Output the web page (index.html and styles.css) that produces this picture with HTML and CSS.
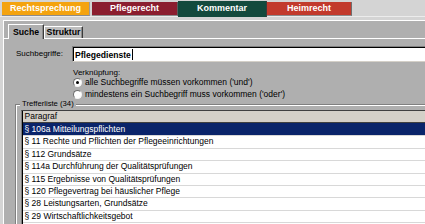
FILE: index.html
```html
<!DOCTYPE html>
<html lang="de">
<head>
<meta charset="utf-8">
<title>Suche</title>
<link rel="stylesheet" href="styles.css">
</head>
<body>
<div class="app">
  <nav class="topbar">
    <div class="ttab t-recht">Rechtsprechung</div>
    <div class="ttab t-pflege">Pflegerecht</div>
    <div class="ttab t-komm active">Kommentar</div>
    <div class="ttab t-heim">Heimrecht</div>
  </nav>
  <div class="main">
    <div class="tabs">
      <div class="tab active">Suche</div>
      <div class="tab">Struktur</div>
    </div>
    <div class="page">
      <div class="search-row">
        <span class="lbl">Suchbegriffe:</span>
        <div class="input"><span class="val">Pflegedienste</span><span class="caret"></span></div>
      </div>
      <div class="options">
        <div class="opt-title">Verknüpfung:</div>
        <div class="radio-row"><span class="radio checked"></span><span>alle Suchbegriffe müssen vorkommen ('und')</span></div>
        <div class="radio-row"><span class="radio"></span><span>mindestens ein Suchbegriff muss vorkommen ('oder')</span></div>
      </div>
      <div class="group">
        <span class="legend">Trefferliste (34)</span>
        <div class="list">
          <div class="list-inner">
            <div class="head">Paragraf</div>
            <div class="row sel">§ 106a Mitteilungspflichten</div>
            <div class="row">§ 11 Rechte und Pflichten der Pflegeeinrichtungen</div>
            <div class="row">§ 112 Grundsätze</div>
            <div class="row">§ 114a Durchführung der Qualitätsprüfungen</div>
            <div class="row">§ 115 Ergebnisse von Qualitätsprüfungen</div>
            <div class="row">§ 120 Pflegevertrag bei häuslicher Pflege</div>
            <div class="row">§ 28 Leistungsarten, Grundsätze</div>
            <div class="row">§ 29 Wirtschaftlichkeitsgebot</div>
            <div class="row"></div>
          </div>
        </div>
      </div>
    </div>
  </div>
</div>
</body>
</html>
```
FILE: styles.css
```css
html, body {
  margin: 0;
  padding: 0;
}
body {
  background: #d4d4d4;
  font-family: "Liberation Sans", Arial, sans-serif;
  color: #000;
}
.app {
  width: 425px;
  height: 224px;
  overflow: hidden;
  background: #d4d4d4;
}

/* top colored tabs */
.topbar {
  display: flex;
  align-items: flex-start;
  height: 17px;
  box-sizing: border-box;
  padding: 2px 0 0 2px;
  border-bottom: 1px solid #ececec;
}
.ttab {
  height: 13px;
  line-height: 13px;
  border-bottom: 1px solid #8c8c8c;
  border-right: 1px solid #7a7a7a;
  color: #fff;
  font-weight: bold;
  font-size: 9px;
  text-align: center;
  white-space: nowrap;
}
.t-recht { width: 87px; background: #f4a30f; margin-right: 2px; border-right-color: #9a9a9a; }
.t-pflege { width: 85px; background: #8b1e2f; border-right-color: #5a5a5a; }
.t-komm { width: 88px; background: #134a3d; border-right-color: #3c3c3c; }
.t-heim { width: 84px; background: #c23a2c; border-right-color: #6e6e6e; }
.ttab.active {
  margin-top: -1px;
  height: 15px;
  padding-top: 1px;
  line-height: 13px;
  border-bottom: none;
}

/* main panel */
.main {
  width: 460px;
  height: 210px;
  margin: 3px 0 0 3px;
  background: #afafaf;
  border-top: 1px solid #fff;
  border-left: 1px solid #fff;
}
.tabs {
  display: flex;
  align-items: flex-end;
  height: 14px;
  padding: 3px 0 0 4px;
  position: relative;
  z-index: 1;
}
.tab {
  box-sizing: border-box;
  border-top: 1px solid #fff;
  border-left: 1px solid #fff;
  border-right: 1px solid #3a3a3a;
  box-shadow: inset -1px 0 0 #8a8a8a;
  font-weight: bold;
  font-size: 8.7px;
  text-align: center;
  white-space: nowrap;
  width: 39px;
  height: 12px;
  line-height: 11px;
  background: #bdbdbd;
}
.tab.active {
  width: 36px;
  height: 15px;
  line-height: 13px;
  padding-top: 1px;
  margin-bottom: -1px;
  background: #afafaf;
}

.page {
  border-top: 1px solid #fff;
  padding-top: 7px;
}
.search-row {
  display: flex;
  height: 16px;
}
.lbl {
  width: 56px;
  margin-left: 12px;
  font-size: 8px;
  line-height: 16px;
  white-space: nowrap;
}
.input {
  flex: 1;
  box-sizing: border-box;
  height: 16px;
  background: #fff;
  border-top: 1px solid #808080;
  border-left: 1px solid #808080;
  border-bottom: 1px solid #d4d0c8;
  box-shadow: inset 1px 1px 0 #000;
  padding-left: 2px;
  display: flex;
  align-items: center;
}
.val {
  font-weight: bold;
  font-size: 8.6px;
  line-height: 14px;
  padding-top: 1px;
}
.caret {
  width: 1px;
  height: 11px;
  background: #000;
  margin-left: 1px;
}

.options {
  margin-top: 7px;
  padding-left: 69px;
  font-size: 8.5px;
}
.opt-title {
  font-size: 8px;
  line-height: 7px;
}
.radio-row {
  display: flex;
  align-items: center;
  height: 12px;
  line-height: 12px;
  white-space: nowrap;
}
.radio {
  box-sizing: border-box;
  width: 9px;
  height: 9px;
  margin-right: 3px;
  border-radius: 50%;
  background: #fff;
  border: 1px solid;
  border-color: #6e6e6e #f4f4f4 #f4f4f4 #6e6e6e;
  position: relative;
  flex: none;
}
.radio.checked::after {
  content: "";
  position: absolute;
  left: 2px;
  top: 2px;
  width: 3px;
  height: 3px;
  border-radius: 50%;
  background: #000;
}

/* group box */
.group {
  position: relative;
  margin: 4px 0 0 11px;
  border-top: 1px solid #808080;
  border-left: 1px solid #808080;
  box-shadow: inset 1px 1px 0 #fff;
  padding: 5px 0 0 5px;
  height: 200px;
}
.legend {
  position: absolute;
  top: -6px;
  left: 4px;
  padding: 0 2px;
  background: #afafaf;
  font-size: 7.7px;
  line-height: 9px;
  white-space: nowrap;
}
.list {
  border-top: 1px solid #404040;
  border-left: 1px solid #808080;
  background: #fff;
}
.list-inner {
  border-left: 1px solid #000;
}
.head {
  height: 11px;
  line-height: 11px;
  background: #d4d0c8;
  border-bottom: 1px solid #404040;
  font-size: 8.5px;
  padding-left: 1.5px;
}
.row {
  box-sizing: border-box;
  height: 12.4px;
  line-height: 11.4px;
  border-top: 1px solid #d8d8d8;
  font-size: 8.5px;
  padding-left: 1.5px;
  white-space: nowrap;
  background: #fff;
}
.row.sel {
  background: #0a246a;
  border-top-color: #0a246a;
  color: #fff;
}
```
